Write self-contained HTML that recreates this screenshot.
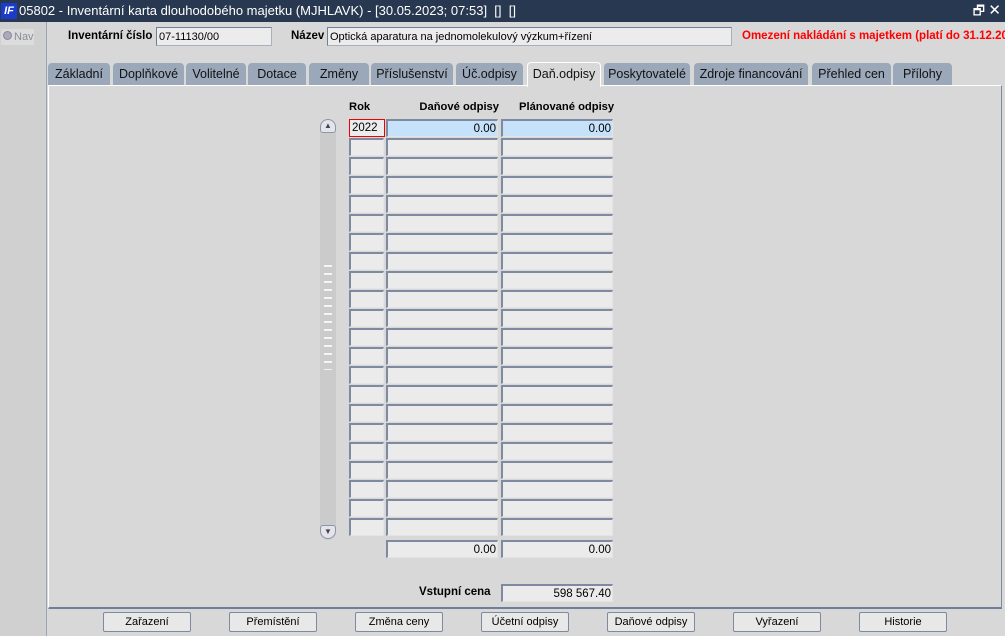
<!DOCTYPE html>
<html><head><meta charset="utf-8"><style>
*{box-sizing:border-box;margin:0;padding:0}
body{width:1005px;height:636px;overflow:hidden;background:#d8d8d8;font-family:"Liberation Sans",Arial,sans-serif;font-size:12px;color:#000;position:relative}
.a{position:absolute}
.title{left:0;top:0;width:1005px;height:22px;background:#283850;color:#fff;font-size:13px;line-height:22px}
.left{left:0;top:22px;width:47px;height:614px;background:#d0d0d0;border-right:1px solid #9aa4b4}
.fld{position:absolute;background:#ececec;border:1px solid #a8b0bc;border-top-color:#6f7f98;border-left-color:#6f7f98;height:19px;font-size:11px;line-height:18px;padding:0 2px}
.tab{position:absolute;top:63px;height:23px;background:#9aa8ba;border-radius:4px 4px 0 0;text-align:center;line-height:23px;font-size:12.5px;color:#111}
.panel{left:48px;top:85px;width:954px;height:524px;border:1px solid #fff;border-right-color:#7a8aa0;border-bottom:2px solid #6f7f98;background:#d8d8d8}
.hdr{position:absolute;top:101px;font-weight:bold;font-size:11.2px}
.lbl{position:absolute;font-weight:bold;font-size:11.5px}
.c{position:absolute;height:18px;background:#ebebeb;border:2px solid #7d8aa0;border-right:1px solid #e4e4e4;border-bottom:1px solid #e4e4e4;font-size:11.5px;line-height:16px;text-align:right;padding-right:1px}
.btn{position:absolute;top:612px;width:88px;height:20px;border:1px solid #7d8aa0;border-radius:2px;background:#e8e8e8;text-align:center;line-height:18px;font-size:11px}
</style></head><body>
<div class="a title"><span style="display:inline-block;width:16px;height:16px;background:#1a3cc8;color:#fff;font-weight:bold;font-style:italic;font-size:11px;line-height:16px;text-align:center;margin:3px 2px 0 1px;vertical-align:top">IF</span>05802 - Inventární karta dlouhodobého majetku (MJHLAVK) - [30.05.2023; 07:53] &nbsp;[] &nbsp;[]<span class="a" style="right:20px;top:0">🗗</span><span class="a" style="right:4px;top:0;font-size:15px">✕</span></div>
<div class="a left"><div class="a" style="left:1px;top:7px;width:33px;height:16px;background:#dcdcdc;color:#8a8e96;font-size:11px;line-height:16px"><span style="display:inline-block;width:9px;height:9px;border-radius:50%;background:#aab;border:1px solid #889;margin:0 2px 0 2px"></span>Nav</div></div>
<div class="lbl" style="left:68px;top:30px">Inventární číslo</div>
<div class="fld" style="left:156px;top:27px;width:116px">07-11130/00</div>
<div class="lbl" style="left:291px;top:30px">Název</div>
<div class="fld" style="left:327px;top:27px;width:405px">Optická aparatura na jednomolekulový výzkum+řízení</div>
<div class="lbl" style="left:742px;top:30px;color:#f00;white-space:nowrap">Omezení nakládání s majetkem (platí do 31.12.20</div>
<div class="tab" style="left:48px;width:62px">Základní</div>
<div class="tab" style="left:113px;width:71px">Doplňkové</div>
<div class="tab" style="left:186px;width:60px">Volitelné</div>
<div class="tab" style="left:248px;width:58px">Dotace</div>
<div class="tab" style="left:309px;width:60px">Změny</div>
<div class="tab" style="left:371px;width:82px">Příslušenství</div>
<div class="tab" style="left:456px;width:67px">Úč.odpisy</div>
<div class="tab" style="left:604px;width:86px">Poskytovatelé</div>
<div class="tab" style="left:694px;width:114px">Zdroje financování</div>
<div class="tab" style="left:812px;width:79px">Přehled cen</div>
<div class="tab" style="left:893px;width:59px">Přílohy</div>
<div class="a panel"></div>
<div class="tab" style="left:527px;width:74px;top:62px;height:25px;background:#d8d8d8;border:1px solid #fff;border-bottom:none;z-index:2">Daň.odpisy</div>
<div class="hdr" style="left:349px">Rok</div>
<div class="hdr" style="left:419px;width:80px;text-align:right">Daňové odpisy</div>
<div class="hdr" style="left:519px">Plánované odpisy</div>
<div class="a" style="left:320px;top:119px;width:16px;height:421px;background:#cbcbcb;border-radius:8px"></div>
<div class="a" style="left:320px;top:119px;width:16px;height:14px;background:#e4e4ea;border:1px solid #8a96aa;border-radius:8px 8px 3px 3px;font-size:8px;text-align:center;line-height:12px;color:#445">▲</div>
<div class="a" style="left:320px;top:525px;width:16px;height:14px;background:#e4e4ea;border:1px solid #8a96aa;border-radius:3px 3px 8px 8px;font-size:8px;text-align:center;line-height:12px;color:#445">▼</div>
<div class="a" style="left:324px;top:265px;width:8px;height:105px;background:repeating-linear-gradient(to bottom,#f4f4f4 0 2px,transparent 2px 8px)"></div>
<div id="rows"></div>
<div class="c" style="left:386px;top:540px;width:112px">0.00</div>
<div class="c" style="left:501px;top:540px;width:112px">0.00</div>
<div class="lbl" style="left:419px;top:586px">Vstupní cena</div>
<div class="c" style="left:501px;top:584px;width:112px">598 567.40</div>
<div class="btn" style="left:103px">Zařazení</div>
<div class="btn" style="left:229px">Přemístění</div>
<div class="btn" style="left:355px">Změna ceny</div>
<div class="btn" style="left:481px">Účetní odpisy</div>
<div class="btn" style="left:607px">Daňové odpisy</div>
<div class="btn" style="left:733px">Vyřazení</div>
<div class="btn" style="left:859px">Historie</div>
<script>
var h='';for(var i=0;i<22;i++){var t=119+i*19;
if(i==0){h+='<div class="c" style="left:349px;top:'+t+'px;width:36px;border:1px solid #e00;text-align:left;padding-left:2px;line-height:17px;background:#ececec">2022</div>';
h+='<div class="c" style="left:386px;top:'+t+'px;width:112px;background:#c6e2fa">0.00</div><div class="c" style="left:501px;top:'+t+'px;width:112px;background:#c6e2fa">0.00</div>';}
else{h+='<div class="c" style="left:349px;top:'+t+'px;width:35px"></div><div class="c" style="left:386px;top:'+t+'px;width:112px"></div><div class="c" style="left:501px;top:'+t+'px;width:112px"></div>';}}
document.getElementById('rows').innerHTML=h;
</script>
</body></html>
